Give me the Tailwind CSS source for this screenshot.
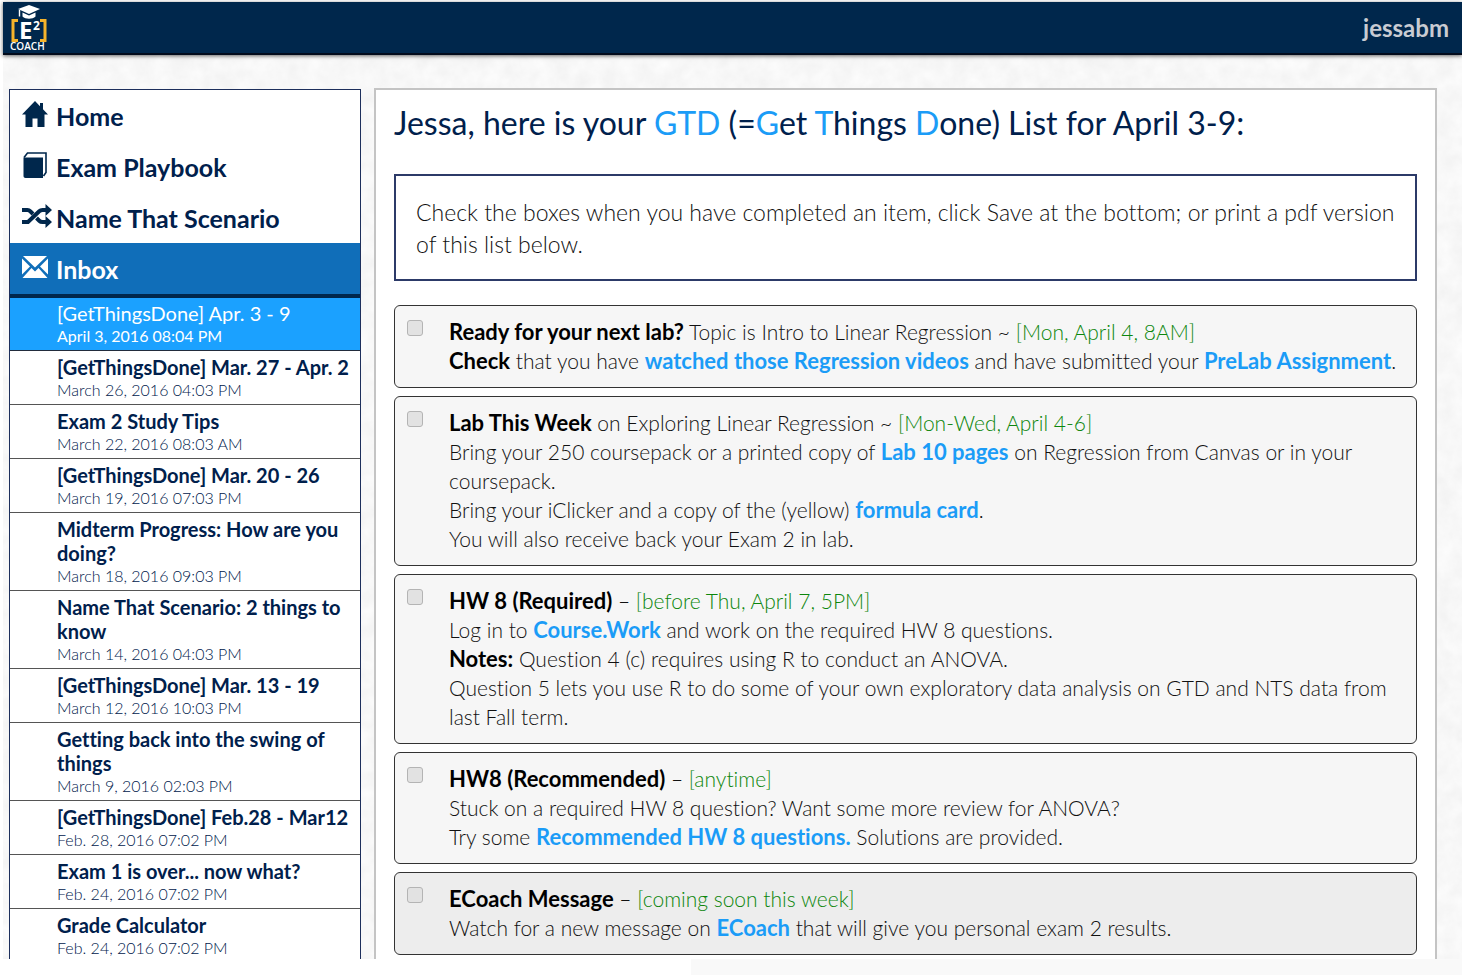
<!DOCTYPE html>
<html lang="en">
<head>
<meta charset="utf-8">
<meta name="viewport" content="width=device-width, initial-scale=1">
<title>E2Coach - Inbox</title>
<script src="https://cdn.jsdelivr.net/npm/@tailwindcss/browser@4"></script>
</head>
<body class="flex h-screen flex-col overflow-hidden bg-white pl-[3px] pt-[2px] font-['Lato',sans-serif] text-[#00204c] [font-variant-ligatures:none]">
  <header class="relative z-10 flex h-[53px] shrink-0 items-center justify-between border-b-2 border-[#020b1c] bg-[#00274c] pl-[7px] pr-[13px] shadow-[0_1px_4px_rgba(0,0,0,0.6)]">
    <a href="#" aria-label="E2 Coach">
      <svg class="overflow-visible" width="38" height="50" viewBox="0 0 38 50">
        <path d="M8 17.500H3v20h5M30 17.500h5v20h-5" fill="none" stroke="#f5b32b" stroke-width="3"/>
        <path d="M19 2 8 6l11 5 11-5z" fill="#fff"/>
        <path d="M12.500 9.500v4c3 3 10 3 13 0v-4L19 12.500z" fill="#fff"/>
        <path d="M9.500 7v6.500" stroke="#fff" stroke-width="1.4"/>
        <text x="9" y="36" font-family="Open Sans, sans-serif" font-weight="700" font-size="24" fill="#fff">E</text>
        <text x="23" y="27" font-family="Open Sans, sans-serif" font-weight="700" font-size="12" fill="#fff">2</text>
        <text x="0" y="47" font-family="Open Sans, sans-serif" font-weight="600" font-size="10" fill="#fff">COACH</text>
      </svg>
    </a>
    <a href="#" class="text-[24px] font-bold text-[#c8cbd2]">jessabm</a>
  </header>

  <div class="relative flex min-h-0 flex-1 items-stretch gap-[13px] overflow-hidden bg-[#f7f7f7] pl-[6px] pr-[25px]">
    <!-- Faint paper grain behind the panels -->
    <svg class="absolute inset-0 h-full w-full" aria-hidden="true">
      <filter id="paper" x="0" y="0" width="100%" height="100%" color-interpolation-filters="sRGB">
        <feTurbulence type="fractalNoise" baseFrequency="0.06" numOctaves="4" seed="4"/>
        <feColorMatrix values=".05 0 0 0 .945  .05 0 0 0 .945  .05 0 0 0 .945  0 0 0 0 1"/>
      </filter>
      <rect width="100%" height="100%" filter="url(#paper)"/>
    </svg>
    <aside class="relative mt-[34px] w-[352px] shrink-0 self-start border border-[#1d2f5c] bg-white">
      <nav class="text-[25px] font-bold leading-[51px]">
        <a href="#" class="flex h-[51px] items-center gap-2 pl-3 pt-px">
          <svg class="-mt-1" width="26" height="26" viewBox="0 0 26 26" fill="#00274c"><path d="M13 0 0 13.500h3.500V26h7v-8.500h5V26h7V13.500H26L21 8.200V2h-3v3.200z"/></svg>
          <span>Home</span></a>
        <a href="#" class="flex h-[51px] items-center gap-2 pl-3 pt-px">
          <svg class="-mt-1" width="26" height="26" viewBox="0 0 26 26"><path d="M2 5.500 5.500 1H24v19.500L21.500 24" fill="none" stroke="#00274c" stroke-width="1.600"/><path d="M1.500 5.500H21V26H3.500c-1.200 0-2-.8-2-2z" fill="#00274c"/></svg>
          <span>Exam Playbook</span></a>
        <a href="#" class="flex h-[51px] items-center gap-1 pl-3 pt-px">
          <svg class="-mt-1" width="30" height="24" viewBox="0 0 30 24" fill="none" stroke="#00274c" stroke-width="4"><path d="M0 6h5.500c1.500 0 2 .5 3 1.500L11 10M0 18h6L17.500 7c1-1 1.500-1 3-1H24M14.500 14l3 3c1 1 1.500 1 3 1H24"/><path d="M23.500 0 30 6l-6.500 6zM23.500 12l6.500 6-6.500 6z" fill="#00274c" stroke="none"/></svg>
          <span>Name That Scenario</span></a>
        <a href="#" class="flex h-[55px] items-center gap-2 border-b-4 border-[#00274c] bg-[#106eb9] pl-3 pt-px text-white">
          <svg class="-mt-1" width="26" height="22" viewBox="0 0 26 22" fill="#fff"><path d="M1 0h24L13 11.500zM0 2.500 8 10.500 0 18.500zM26 2.500v16l-8-8zM9.500 12l3.500 3.500 3.500-3.500L25.500 22H.5z"/></svg>
          <span>Inbox</span></a>
      </nav>
      <ul>
        <li class="border-b border-[#222c3c] bg-[#1ba1ff] pb-[3px] pl-[47px] pt-[3px] text-white"><a href="#" class="block text-[20px] leading-6">[GetThingsDone] Apr. 3 - 9</a><p class="text-[16px] leading-[22px]">April 3, 2016 08:04 PM</p></li>
        <li class="border-b border-[#555] pb-[3px] pl-[47px] pt-1"><a href="#" class="block text-[20px] font-bold leading-6">[GetThingsDone] Mar. 27 - Apr. 2</a><p class="text-[16px] font-light leading-[22px]">March 26, 2016 04:03 PM</p></li>
        <li class="border-b border-[#555] pb-[3px] pl-[47px] pt-1"><a href="#" class="block text-[20px] font-bold leading-6">Exam 2 Study Tips</a><p class="text-[16px] font-light leading-[22px]">March 22, 2016 08:03 AM</p></li>
        <li class="border-b border-[#555] pb-[3px] pl-[47px] pt-1"><a href="#" class="block text-[20px] font-bold leading-6">[GetThingsDone] Mar. 20 - 26</a><p class="text-[16px] font-light leading-[22px]">March 19, 2016 07:03 PM</p></li>
        <li class="border-b border-[#555] pb-[3px] pl-[47px] pt-1"><a href="#" class="block text-[20px] font-bold leading-6">Midterm Progress: How are you doing?</a><p class="text-[16px] font-light leading-[22px]">March 18, 2016 09:03 PM</p></li>
        <li class="border-b border-[#555] pb-[3px] pl-[47px] pt-1"><a href="#" class="block text-[20px] font-bold leading-6">Name That Scenario: 2 things to know</a><p class="text-[16px] font-light leading-[22px]">March 14, 2016 04:03 PM</p></li>
        <li class="border-b border-[#555] pb-[3px] pl-[47px] pt-1"><a href="#" class="block text-[20px] font-bold leading-6">[GetThingsDone] Mar. 13 - 19</a><p class="text-[16px] font-light leading-[22px]">March 12, 2016 10:03 PM</p></li>
        <li class="border-b border-[#555] pb-[3px] pl-[47px] pt-1"><a href="#" class="block text-[20px] font-bold leading-6">Getting back into the swing of things</a><p class="text-[16px] font-light leading-[22px]">March 9, 2016 02:03 PM</p></li>
        <li class="border-b border-[#555] pb-[3px] pl-[47px] pt-1"><a href="#" class="block text-[20px] font-bold leading-6">[GetThingsDone] Feb.28 - Mar12</a><p class="text-[16px] font-light leading-[22px]">Feb. 28, 2016 07:02 PM</p></li>
        <li class="border-b border-[#555] pb-[3px] pl-[47px] pt-1"><a href="#" class="block text-[20px] font-bold leading-6">Exam 1 is over... now what?</a><p class="text-[16px] font-light leading-[22px]">Feb. 24, 2016 07:02 PM</p></li>
        <li class="pb-3 pl-[47px] pt-1"><a href="#" class="block text-[20px] font-bold leading-6">Grade Calculator</a><p class="text-[16px] font-light leading-[22px]">Feb. 24, 2016 07:02 PM</p></li>
      </ul>
    </aside>

    <main class="relative mt-[33px] min-w-0 flex-1 self-start border-2 border-[#c4c4c4] bg-white px-[18px] pb-8 pt-[13px]">
      <h1 class="text-[32px] leading-10">Jessa, here is your <span class="text-[#1b9cf7]">GTD</span> (=<span class="text-[#1b9cf7]">G</span>et <span class="text-[#1b9cf7]">T</span>hings <span class="text-[#1b9cf7]">D</span>one) List for April 3-9:</h1>
      <p class="mt-[31px] border-2 border-[#2c3a68] px-5 pb-[19px] pt-5 text-[23px] font-light leading-8 text-[#111]">Check the boxes when you have completed an item, click Save at the bottom; or print a pdf version of this list below.</p>

      <form class="mt-6 flex flex-col gap-2 text-[21px] font-light leading-[29px] text-[#111] [&_a]:text-[22px] [&_a]:leading-none [&_b]:text-[22px] [&_b]:leading-none [&_label]:text-[22px] [&_label]:leading-none">
        <div class="flex rounded-md border border-[#333] bg-[#f6f6f6] pb-3 pl-3 pr-2 pt-[11px]">
          <input id="t1" type="checkbox" class="mt-[3px] h-4 w-4 shrink-0 appearance-none rounded-[3px] border border-[#b4b4b4] bg-[#e2e2e2]">
          <div class="ml-[26px]"><label for="t1" class="font-bold text-black">Ready for your next lab?</label> Topic is Intro to Linear Regression ~ <span class="text-[#0c860c]">[Mon, April 4, 8AM]</span><br><b class="font-bold text-black">Check</b> that you have <a href="#" class="font-bold text-[#1b9cf7]">watched those Regression videos</a> and have submitted your <a href="#" class="font-bold text-[#1b9cf7]">PreLab Assignment</a>.</div>
        </div>
        <div class="flex rounded-md border border-[#333] bg-[#f6f6f6] pb-3 pl-3 pr-2 pt-[11px]">
          <input id="t2" type="checkbox" class="mt-[3px] h-4 w-4 shrink-0 appearance-none rounded-[3px] border border-[#b4b4b4] bg-[#e2e2e2]">
          <div class="ml-[26px]"><label for="t2" class="font-bold text-black">Lab This Week</label> on Exploring Linear Regression ~ <span class="text-[#0c860c]">[Mon-Wed, April 4-6]</span><br>Bring your 250 coursepack or a printed copy of <a href="#" class="font-bold text-[#1b9cf7]">Lab 10 pages</a> on Regression from Canvas or in your coursepack.<br>Bring your iClicker and a copy of the (yellow) <a href="#" class="font-bold text-[#1b9cf7]">formula card</a>.<br>You will also receive back your Exam 2 in lab.</div>
        </div>
        <div class="flex rounded-md border border-[#333] bg-[#f6f6f6] pb-3 pl-3 pr-2 pt-[11px]">
          <input id="t3" type="checkbox" class="mt-[3px] h-4 w-4 shrink-0 appearance-none rounded-[3px] border border-[#b4b4b4] bg-[#e2e2e2]">
          <div class="ml-[26px]"><label for="t3" class="font-bold text-black">HW 8 (Required)</label> – <span class="text-[#0c860c]">[before Thu, April 7, 5PM]</span><br>Log in to <a href="#" class="font-bold text-[#1b9cf7]">Course.Work</a> and work on the required HW 8 questions.<br><b class="font-bold text-black">Notes:</b> Question 4 (c) requires using R to conduct an ANOVA.<br>Question 5 lets you use R to do some of your own exploratory data analysis on GTD and NTS data from last Fall term.</div>
        </div>
        <div class="flex rounded-md border border-[#333] bg-[#f6f6f6] pb-3 pl-3 pr-2 pt-[11px]">
          <input id="t4" type="checkbox" class="mt-[3px] h-4 w-4 shrink-0 appearance-none rounded-[3px] border border-[#b4b4b4] bg-[#e2e2e2]">
          <div class="ml-[26px]"><label for="t4" class="font-bold text-black">HW8 (Recommended)</label> – <span class="text-[#0c860c]">[anytime]</span><br>Stuck on a required HW 8 question? Want some more review for ANOVA?<br>Try some <a href="#" class="font-bold text-[#1b9cf7]">Recommended HW 8 questions.</a> Solutions are provided.</div>
        </div>
        <div class="flex rounded-md border border-[#333] bg-[#ededed] pb-3 pl-3 pr-2 pt-[11px]">
          <input id="t5" type="checkbox" class="mt-[3px] h-4 w-4 shrink-0 appearance-none rounded-[3px] border border-[#b4b4b4] bg-[#e2e2e2]">
          <div class="ml-[26px]"><label for="t5" class="font-bold text-black">ECoach Message</label> – <span class="text-[#0c860c]">[coming soon this week]</span><br>Watch for a new message on <a href="#" class="font-bold text-[#1b9cf7]">ECoach</a> that will give you personal exam 2 results.</div>
        </div>
      </form>
    </main>
  </div>
  <footer class="flex h-4 shrink-0 bg-white pl-[688px]"><div class="flex-1 bg-[#f9f9f9]"></div></footer>
</body>
</html>
